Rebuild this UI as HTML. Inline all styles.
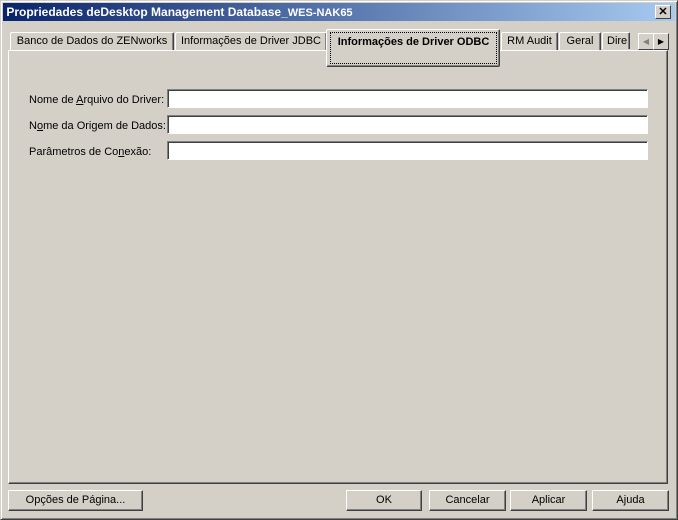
<!DOCTYPE html><html><head><style>
body{margin:0;width:678px;height:520px;background:#d4d0c8;font-family:"Liberation Sans",sans-serif;font-size:11px;position:relative;overflow:hidden}
.a{position:absolute}
.win{left:0;top:0;width:676px;height:518px;border:1px solid;border-color:#d4d0c8 #404040 #404040 #d4d0c8;box-shadow:inset 1px 1px #fff,inset -1px -1px #808080}
.title{left:3px;top:3px;width:672px;height:18px;background:linear-gradient(90deg,#0a246a,#a6caf0);color:#fff;font-weight:bold;font-size:12px;line-height:18px}
.x{left:655px;top:5px;width:14px;height:12px;background:#d4d0c8;border:1px solid;border-color:#fff #404040 #404040 #fff;font-size:11px;line-height:12px;text-align:center;color:#000;font-weight:bold}
.tab{top:32px;height:17px;border:1px solid;border-color:#fff #404040 transparent #fff;border-bottom:none;box-shadow:inset -1px 0 #808080;text-align:center;line-height:17px;border-radius:2px 2px 0 0}
.panel{left:8px;top:50px;width:658px;height:432px;border:1px solid;border-color:#fff #404040 #404040 #fff;box-shadow:inset -1px -1px #808080}
.lbl{left:29px}
.inp{left:167px;width:479px;height:17px;background:#fff;border:1px solid;border-color:#808080 #fff #fff #808080;box-shadow:inset 1px 1px #404040}
.btn{top:490px;height:19px;border:1px solid;border-color:#fff #404040 #404040 #fff;box-shadow:inset -1px -1px #808080;text-align:center;line-height:19px}
u{text-decoration:underline}
</style></head><body>
<div class="a win"></div>
<div class="a title">&nbsp;Propriedades deDesktop Management Database_<span style="font-size:11px">WES-NAK65</span></div>
<div class="a x">✕</div>
<div class="a panel"></div>
<div class="a tab" style="left:10px;width:162px">Banco de Dados do ZENworks</div>
<div class="a tab" style="left:175px;width:150px">Informações de Driver JDBC</div>
<div class="a tab" style="left:501px;width:55px">RM Audit</div>
<div class="a tab" style="left:559px;width:40px">Geral</div>
<div class="a tab" style="left:602px;width:28px;overflow:hidden;text-align:left;padding-left:4px;box-sizing:border-box">Dire</div>
<div class="a" style="left:326px;top:29px;width:172px;height:36px;background:#d4d0c8;border:1px solid;border-color:#fff #404040 #404040 #fff;border-radius:2px;box-shadow:inset -1px -1px #808080"></div>
<div class="a" style="left:330px;top:32px;width:165px;height:30px;border:1px dotted #000;font-weight:bold;text-align:center;line-height:18px">Informações de Driver ODBC</div>
<div class="a" style="left:638px;top:33px;width:14px;height:15px;border:1px solid;border-color:#fff #404040 #404040 #fff;text-align:center;font-size:8px;line-height:15px;color:#808080">◀</div>
<div class="a" style="left:653px;top:33px;width:14px;height:15px;border:1px solid;border-color:#fff #404040 #404040 #fff;text-align:center;font-size:8px;line-height:15px">▶</div>
<div class="a lbl" style="top:94px">Nome de <u>A</u>rquivo do Driver:</div>
<div class="a lbl" style="top:120px">N<u>o</u>me da Origem de Dados:</div>
<div class="a lbl" style="top:146px">Parâmetros de Co<u>n</u>exão:</div>
<div class="a inp" style="top:89px"></div>
<div class="a inp" style="top:115px"></div>
<div class="a inp" style="top:141px"></div>
<div class="a btn" style="left:8px;width:133px">Opções de Página...</div>
<div class="a btn" style="left:346px;width:74px">OK</div>
<div class="a btn" style="left:429px;width:75px">Cancelar</div>
<div class="a btn" style="left:510px;width:75px">Aplicar</div>
<div class="a btn" style="left:592px;width:75px">Ajuda</div>
</body></html>
